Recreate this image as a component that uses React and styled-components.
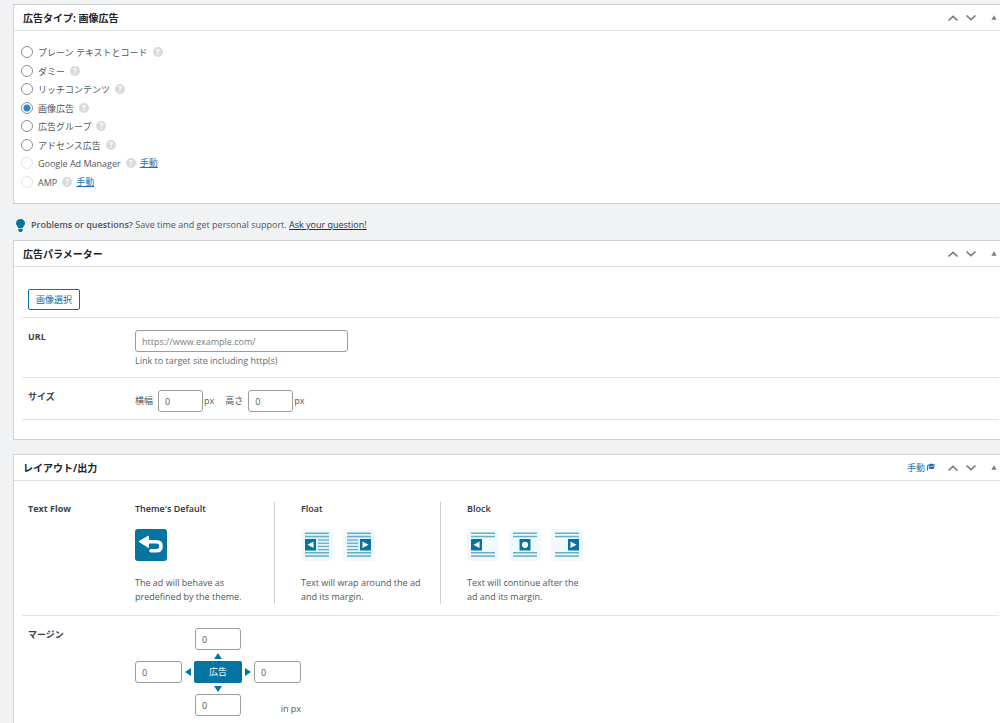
import React from 'react';
import styled, { createGlobalStyle, css } from 'styled-components';

const blue = '#0474a2';
const link = '#2271b1';

const GlobalStyle = createGlobalStyle`
  * {
    box-sizing: border-box;
  }
  body {
    margin: 0;
    background: #f1f2f4;
    color: #50575e;
    font-family: 'Open Sans', 'Noto Sans CJK JP', sans-serif;
    font-size: 9px;
    line-height: 14px;
  }
  button, input {
    font: inherit;
    color: inherit;
  }
  svg {
    display: block;
  }
`;

const Page = styled.main`
  display: flex;
  flex-direction: column;
  min-height: 100vh;
  padding: 4px 0 0 13px;
`;

const Panel = styled.section`
  background: #fff;
  border: 1px solid #d0d2d5;
  border-right: 0;
  ${props => props.$last && css`
    flex: 1;
    margin-top: 14px;
    border-bottom: 0;
  `}
`;

const PanelHeader = styled.header`
  display: flex;
  align-items: center;
  height: 26px;
  padding: 0 0 0 9px;
  border-bottom: 1px solid #dfe0e2;
`;

const PanelTitle = styled.h2`
  flex: 1;
  margin: 0;
  color: #1d2327;
  font-size: 10px;
  font-weight: 700;
`;

const ManualLink = styled.a`
  display: flex;
  align-items: center;
  gap: 1px;
  margin-right: 8px;
  color: ${link};
  text-decoration: none;
`;

const IconButton = styled.button`
  display: flex;
  align-items: center;
  justify-content: center;
  width: 18px;
  height: 18px;
  padding: 0;
  border: 0;
  background: none;
  color: #787c82;
`;

const ToggleButton = styled(IconButton)`
  width: 12px;
  margin-left: 8px;
`;

const TypeList = styled.ul`
  display: flex;
  flex-direction: column;
  justify-content: space-between;
  min-height: 148px;
  margin: 0;
  padding: 0;
  list-style: none;
`;

const TypeBody = styled.div`
  padding: 12px 7px;
`;

const TypeRow = styled.li`
  display: flex;
  align-items: center;
  height: 18px;
`;

const TypeLabel = styled.label`
  display: flex;
  align-items: center;
  gap: 5px;
`;

const TypeName = styled.span`
  padding-top: 2px;
`;

const Radio = styled.input`
  appearance: none;
  width: 12px;
  height: 12px;
  margin: 0;
  border: 1px solid #8c8f94;
  border-radius: 50%;
  background: #fff;

  &:checked {
    background: radial-gradient(circle, #3582c4 3px, #fff 4px);
  }
  &:disabled {
    border-color: #e4e5e6;
  }
`;

const Help = styled.span`
  display: flex;
  align-items: center;
  justify-content: center;
  width: 10px;
  height: 10px;
  margin-left: 5px;
  border-radius: 50%;
  background: #d9dadc;
  color: #fff;
  font-size: 8px;
  font-weight: 700;
  line-height: 10px;
`;

const RowLink = styled.a`
  margin-left: 4px;
  color: ${link};
`;

const Tip = styled.p`
  display: flex;
  align-items: center;
  gap: 6px;
  height: 36px;
  margin: 0;
  padding: 6px 3px 0;

  b {
    font-weight: 600;
  }
  a {
    color: #2c3338;
  }
`;

const ParamBody = styled.div`
  padding: 22px 1px 19px 8px;
`;

const LayoutBody = styled.div`
  padding: 7px 1px 0 8px;
`;

const Row = styled.div`
  display: grid;
  grid-template-columns: 107px 1fr;
  padding: ${props => props.$pad || '12px 6px 10px'};
  border-bottom: ${props => (props.$plain ? '0' : '1px solid #e2e3e5')};
`;

const ButtonRow = styled.div`
  padding: 0 6px 7px;
  border-bottom: 1px solid #e2e3e5;
`;

const RowTitle = styled.span`
  color: #3c434a;
  font-weight: 700;
`;

const SelectButton = styled.button`
  display: block;
  height: 21px;
  padding: 0 7px;
  border: 1px solid ${blue};
  border-radius: 2px;
  background: #fff;
  color: ${blue};
`;

const TextInput = styled.input`
  width: ${props => props.$width || '45px'};
  height: 22px;
  padding: 0 6px;
  border: 1px solid #9a9ca0;
  border-radius: 3px;
  background: #fff;
  color: #50575e;

  &::placeholder {
    color: #787c82;
  }
`;

const UrlInput = styled(TextInput)`
  display: block;
`;

const Hint = styled.p`
  margin: 2px 0 0;
  color: #646970;
`;

const Sizes = styled.div`
  display: flex;
  gap: 11px;
`;

const SizeLabel = styled.label`
  display: flex;
  align-items: center;
  gap: 1px;

  input {
    margin-left: 4px;
  }
`;

const Flows = styled.div`
  display: flex;
  gap: 26px;
`;

const Flow = styled.div`
  width: 140px;
  border-right: ${props => (props.$last ? '0' : '1px solid #cfd0d2')};

  h3 {
    margin: 0;
    color: #2c3338;
    font-size: 9px;
    font-weight: 600;
  }
  p {
    width: 122px;
    margin: 0;
  }
`;

const Choices = styled.div`
  display: flex;
  gap: 10px;
  padding: 13px 0 15px;
`;

const Choice = styled.button`
  width: 32px;
  height: 32px;
  padding: 0;
  border: 0;
  border-radius: 3px;
  background: ${props => (props.$active ? blue : '#f0fafe')};
`;

const MarginGrid = styled.div`
  display: grid;
  grid-template-columns: 47px 12px 48px 12px 47px;
  grid-template-rows: 22px 11px 22px 11px 22px;
  grid-template-areas:
    '.    .  top    .  .'
    '.    .  up     .  .'
    'left al ad     ar right'
    '.    .  down   .  .'
    '.    .  bottom .  unit';
  align-items: center;
  justify-items: center;
`;

const MarginInput = styled(TextInput)`
  grid-area: ${props => props.$area};
`;

const AdBox = styled.div`
  grid-area: ad;
  width: 100%;
  height: 22px;
  border-radius: 2px;
  background: ${blue};
  color: #fff;
  line-height: 22px;
  text-align: center;
`;

const ArrowCell = styled.svg`
  grid-area: ${props => props.$area};
`;

const Unit = styled.span`
  grid-area: unit;
  align-self: end;
  justify-self: end;
`;

const adTypes = [
  { name: 'プレーン テキストとコード' },
  { name: 'ダミー' },
  { name: 'リッチコンテンツ' },
  { name: '画像広告', checked: true },
  { name: '広告グループ' },
  { name: 'アドセンス広告' },
  { name: 'Google Ad Manager', locked: true },
  { name: 'AMP', locked: true },
];

const arrows = {
  up: 'M4 1 8 7H0z',
  down: 'M0 1H8L4 7z',
  al: 'M7 0V8L1 4z',
  ar: 'M1 0V8L7 4z',
};

function Chevron({ down }) {
  return (
    <svg width="12" height="8" viewBox="0 0 12 8" fill="none" stroke="currentColor" strokeWidth="1.7">
      <path d={down ? 'M1.5 1.5 6 5.7 10.5 1.5' : 'M1.5 6.5 6 2.3 10.5 6.5'} />
    </svg>
  );
}

function Header({ title, manual }) {
  return (
    <PanelHeader>
      <PanelTitle>{title}</PanelTitle>
      {manual && (
        <ManualLink href="#manual">
          手動
          <svg width="10" height="10" viewBox="0 0 10 10" fill="currentColor">
            <path d="M5.4 .6 9.8 2 5.4 3.6 2.4 2.5 2 7.4H.9L1.2 2zM3 3.3 5.4 4.1 8.2 3.1V5.4Q5.4 6.9 3 5.4z" />
          </svg>
        </ManualLink>
      )}
      <IconButton type="button" aria-label="Move up"><Chevron /></IconButton>
      <IconButton type="button" aria-label="Move down"><Chevron down /></IconButton>
      <ToggleButton type="button" aria-label="Toggle panel">
        <svg width="6" height="5" viewBox="0 0 6 5" fill="currentColor">
          <path d="M3 .3 5.6 4.7H.4z" />
        </svg>
      </ToggleButton>
    </PanelHeader>
  );
}

function FlowIcon({ kind, side }) {
  const boxX = { left: 4, center: 10.5, right: 17 }[side];
  const rows = kind === 'float' ? [10.4, 13.6, 16.8, 20] : [];
  const textX = side === 'left' ? 17 : 4;
  return (
    <svg width="32" height="32" viewBox="0 0 32 32">
      {kind === 'float' && <path d="M4 4H28V28H4z" fill="#e2f3f9" />}
      <g fill="#68acc6">
        {[3.5, 6.8, 23, 26.3].map(y => <rect key={y} x="4" y={y} width="24" height="1.5" />)}
        {rows.map(y => <rect key={y} x={textX} y={y} width="11" height="1.3" />)}
      </g>
      <rect x={boxX} y="10" width="11" height="11.5" fill={blue} />
      <g fill="#fff">
        {side === 'left' && <path d="M12.5 12.5V19L6.5 15.8z" />}
        {side === 'center' && <circle cx="16" cy="15.8" r="3.1" />}
        {side === 'right' && <path d="M19.5 12.5V19L25.5 15.8z" />}
      </g>
    </svg>
  );
}

export default function App() {
  return (
    <>
      <GlobalStyle />
      <Page>
        <Panel>
          <Header title="広告タイプ: 画像広告" />
          <TypeBody>
            <TypeList>
              {adTypes.map(type => (
                <TypeRow key={type.name}>
                  <TypeLabel>
                    <Radio type="radio" name="ad-type" defaultChecked={type.checked} disabled={type.locked} />
                    <TypeName>{type.name}</TypeName>
                  </TypeLabel>
                  <Help>?</Help>
                  {type.locked && <RowLink href="#manual">手動</RowLink>}
                </TypeRow>
              ))}
            </TypeList>
          </TypeBody>
        </Panel>

        <Tip>
          <svg width="9" height="13" viewBox="0 0 9 13" fill={blue}>
            <path d="M4.5 0C7 0 9 1.8 9 4.2 9 6.3 7 7.3 6.8 9.3H2.2C2 7.3 0 6.3 0 4.2 0 1.8 2 0 4.5 0zM2.3 10H6.7V11.3L5.7 13H3.3L2.3 11.3z" />
          </svg>
          <span>
            <b>Problems or questions?</b> Save time and get personal support. <a href="#support">Ask your question!</a>
          </span>
        </Tip>

        <Panel>
          <Header title="広告パラメーター" />
          <ParamBody>
            <ButtonRow>
              <SelectButton type="button">画像選択</SelectButton>
            </ButtonRow>
            <Row $pad="12px 6px 9px">
              <RowTitle as="label" htmlFor="url">URL</RowTitle>
              <div>
                <UrlInput id="url" type="url" $width="213px" placeholder="https://www.example.com/" />
                <Hint>Link to target site including http(s)</Hint>
              </div>
            </Row>
            <Row $pad="12px 6px 7px">
              <RowTitle>サイズ</RowTitle>
              <Sizes>
                <SizeLabel>横幅<TextInput defaultValue="0" />px</SizeLabel>
                <SizeLabel>高さ<TextInput defaultValue="0" />px</SizeLabel>
              </Sizes>
            </Row>
          </ParamBody>
        </Panel>

        <Panel $last>
          <Header title="レイアウト/出力" manual />
          <LayoutBody>
            <Row $pad="14px 6px 11px">
              <RowTitle>Text Flow</RowTitle>
              <Flows>
                <Flow>
                  <h3>Theme's Default</h3>
                  <Choices>
                    <Choice type="button" aria-label="Default" $active>
                      <svg width="32" height="32" viewBox="0 0 32 32">
                        <path d="M4 12.5 13.5 7V18.5z" fill="#fff" stroke="#fff" strokeLinejoin="round" />
                        <path d="M12 12.8H21.5Q26 12.8 26 17.3T21.5 21.8H16" fill="none" stroke="#fff" strokeWidth="3.6" strokeLinecap="round" />
                      </svg>
                    </Choice>
                  </Choices>
                  <p>The ad will behave as predefined by the theme.</p>
                </Flow>
                <Flow>
                  <h3>Float</h3>
                  <Choices>
                    {['left', 'right'].map(side => (
                      <Choice key={side} type="button" aria-label={'Float ' + side}>
                        <FlowIcon kind="float" side={side} />
                      </Choice>
                    ))}
                  </Choices>
                  <p>Text will wrap around the ad and its margin.</p>
                </Flow>
                <Flow $last>
                  <h3>Block</h3>
                  <Choices>
                    {['left', 'center', 'right'].map(side => (
                      <Choice key={side} type="button" aria-label={'Block ' + side}>
                        <FlowIcon kind="block" side={side} />
                      </Choice>
                    ))}
                  </Choices>
                  <p>Text will continue after the ad and its margin.</p>
                </Flow>
              </Flows>
            </Row>
            <Row $pad="12px 6px 0" $plain>
              <RowTitle>マージン</RowTitle>
              <MarginGrid>
                <MarginInput $area="top" $width="46px" defaultValue="0" aria-label="Top margin" />
                <MarginInput $area="left" $width="47px" defaultValue="0" aria-label="Left margin" />
                <MarginInput $area="right" $width="47px" defaultValue="0" aria-label="Right margin" />
                <MarginInput $area="bottom" $width="46px" defaultValue="0" aria-label="Bottom margin" />
                <AdBox>広告</AdBox>
                {Object.keys(arrows).map(area => (
                  <ArrowCell key={area} $area={area} width="8" height="8" viewBox="0 0 8 8" fill={blue}>
                    <path d={arrows[area]} />
                  </ArrowCell>
                ))}
                <Unit>in px</Unit>
              </MarginGrid>
            </Row>
          </LayoutBody>
        </Panel>
      </Page>
    </>
  );
}
